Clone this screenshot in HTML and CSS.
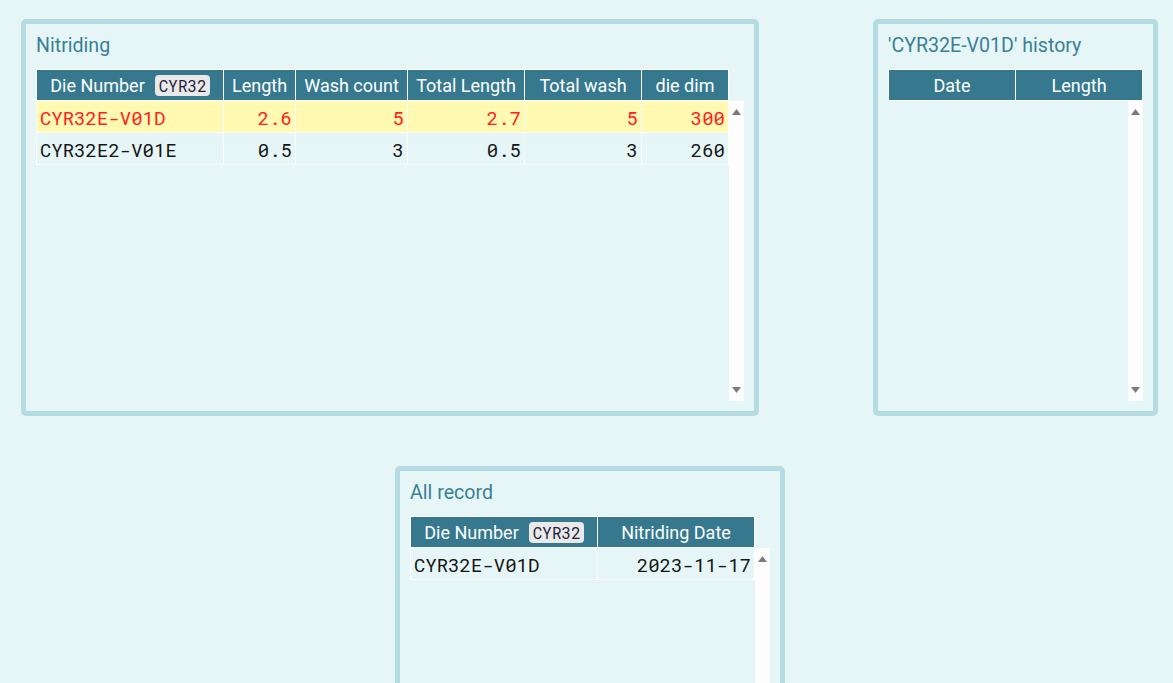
FILE: index.html
```html
<!DOCTYPE html>
<html>
<head>
<meta charset="utf-8">
<title>Nitriding</title>
<link rel="stylesheet" href="styles.css">
</head>
<body>
<div class="page">
  <div class="top">
    <section class="panel">
      <h2 class="title">Nitriding</h2>
      <div class="thead cols-nit">
        <div class="th">Die Number<input class="filter" value="CYR32E"></div>
        <div class="th">Length</div>
        <div class="th">Wash count</div>
        <div class="th">Total Length</div>
        <div class="th">Total wash</div>
        <div class="th">die dim</div>
      </div>
      <div class="bodywrap">
        <div class="tbody">
          <div class="tr cols-nit hl">
            <div class="td">CYR32E-V01D</div>
            <div class="td num">2.6</div>
            <div class="td num">5</div>
            <div class="td num">2.7</div>
            <div class="td num">5</div>
            <div class="td num">300</div>
          </div>
          <div class="tr cols-nit">
            <div class="td">CYR32E2-V01E</div>
            <div class="td num">0.5</div>
            <div class="td num">3</div>
            <div class="td num">0.5</div>
            <div class="td num">3</div>
            <div class="td num">260</div>
          </div>
        </div>
        <div class="vscroll">
          <svg width="9" height="6" viewBox="0 0 9 6"><polygon points="4.5,0 9,6 0,6" fill="#7b7b7b"/></svg>
          <svg width="9" height="6" viewBox="0 0 9 6"><polygon points="0,0 9,0 4.5,6" fill="#7b7b7b"/></svg>
        </div>
      </div>
    </section>

    <section class="panel">
      <h2 class="title">'CYR32E-V01D' history</h2>
      <div class="thead cols-hist">
        <div class="th">Date</div>
        <div class="th">Length</div>
      </div>
      <div class="bodywrap">
        <div class="empty"></div>
        <div class="vscroll">
          <svg width="9" height="6" viewBox="0 0 9 6"><polygon points="4.5,0 9,6 0,6" fill="#7b7b7b"/></svg>
          <svg width="9" height="6" viewBox="0 0 9 6"><polygon points="0,0 9,0 4.5,6" fill="#7b7b7b"/></svg>
        </div>
      </div>
    </section>
  </div>

  <div class="bottom">
    <section class="panel">
      <h2 class="title">All record</h2>
      <div class="thead cols-all">
        <div class="th">Die Number<input class="filter" value="CYR32E"></div>
        <div class="th">Nitriding Date</div>
      </div>
      <div class="bodywrap">
        <div class="tbody">
          <div class="tr cols-all">
            <div class="td">CYR32E-V01D</div>
            <div class="td num">2023-11-17</div>
          </div>
        </div>
        <div class="vscroll">
          <svg width="9" height="6" viewBox="0 0 9 6"><polygon points="4.5,0 9,6 0,6" fill="#7b7b7b"/></svg>
          <svg width="9" height="6" viewBox="0 0 9 6"><polygon points="0,0 9,0 4.5,6" fill="#7b7b7b"/></svg>
        </div>
      </div>
    </section>
  </div>
</div>
</body>
</html>
```
FILE: styles.css
```css
html, body {
  margin: 0;
  height: 683px;
  overflow: hidden;
}
body {
  background: #e6f6f7;
  font-family: Roboto, "Liberation Sans", sans-serif;
}
.page {
  padding: 19px 15px 0 21px;
}
.top {
  display: flex;
  justify-content: space-between;
  align-items: flex-start;
}
.bottom {
  display: flex;
  margin-top: 50px;
  padding-left: 374px;
}
.panel {
  background: #e6f6f7;
  border: 5px solid #b5dce2;
  border-radius: 5px;
  padding: 10px;
}
.title {
  margin: 0 0 10px;
  font-size: 19.6px;
  font-weight: 400;
  line-height: 24px;
  height: 25px;
  color: #3a8096;
  white-space: nowrap;
}
.thead {
  display: grid;
  gap: 1px;
  padding: 1px;
  background: #fff;
  width: max-content;
}
.cols-nit { grid-template-columns: 186px 71px 111px 116px 116px 86px; }
.cols-hist { grid-template-columns: 126px 126px; }
.cols-all { grid-template-columns: 186px 156px; }
.th {
  height: 30px;
  background: #36798f;
  color: #fff;
  font-size: 18px;
  display: flex;
  align-items: center;
  justify-content: center;
  white-space: nowrap;
}
.filter {
  width: 55px;
  height: 21px;
  box-sizing: border-box;
  margin: 0 0 0 10px;
  border: 0;
  border-radius: 4px;
  background: #e9e9e9;
  padding: 0 4px;
  font-family: "Roboto Mono", "DejaVu Sans Mono", monospace;
  font-size: 16px;
  color: #1e1e3c;
  outline: none;
}
.bodywrap {
  display: flex;
  height: 300px;
}
.tbody {
  display: flex;
  flex-direction: column;
  gap: 1px;
  padding: 0 1px 1px;
  background: #fff;
  align-self: flex-start;
}
.tr {
  display: grid;
  column-gap: 1px;
  height: 31px;
}
.td {
  display: flex;
  align-items: center;
  padding: 1px 3px 0;
  background: #e6f6f7;
  color: #151515;
  font-family: "Roboto Mono", "DejaVu Sans Mono", monospace;
  font-size: 19px;
  white-space: nowrap;
  overflow: hidden;
}
.num { justify-content: flex-end; }
.hl .td {
  background: #fff9b1;
  color: #ff2020;
}
.empty { flex: 1; }
.vscroll {
  width: 15px;
  box-sizing: border-box;
  background: #fdfdfd;
  display: flex;
  flex-direction: column;
  justify-content: space-between;
  align-items: center;
  padding: 8px 0;
}
.vscroll svg { display: block; }
```
